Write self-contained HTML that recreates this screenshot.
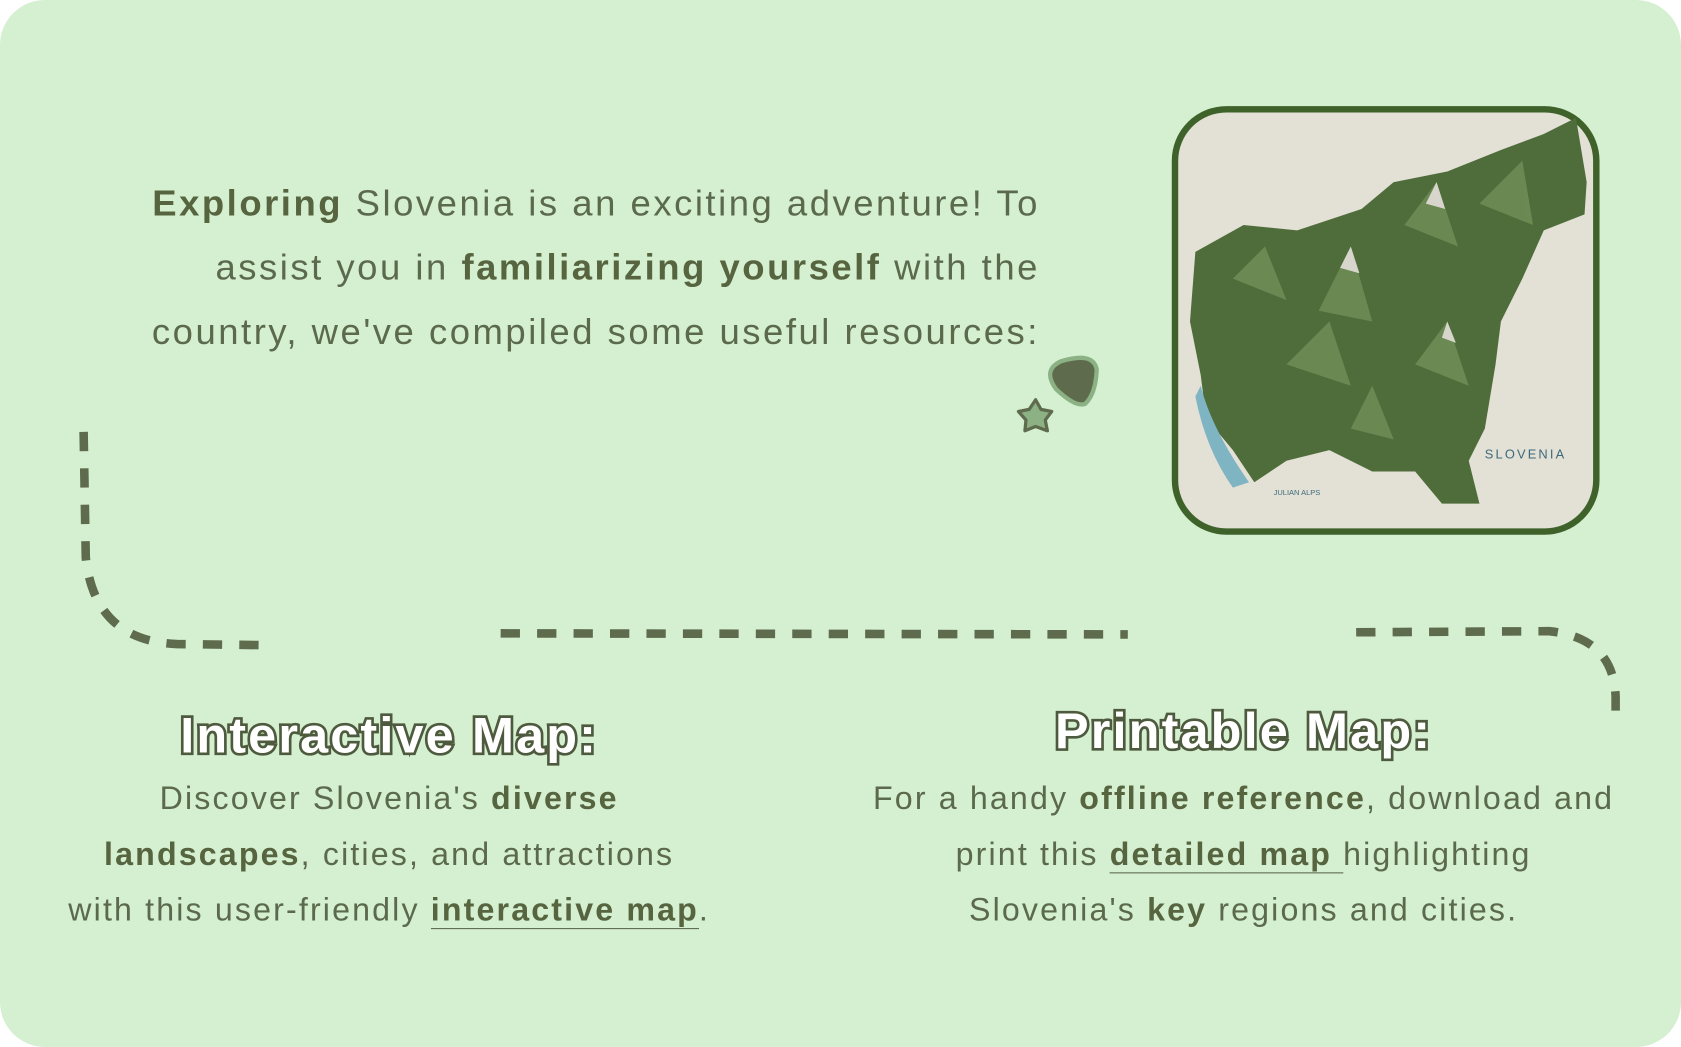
<!DOCTYPE html>
<html><head><meta charset="utf-8"><style>
html,body{margin:0;padding:0;width:1681px;height:1047px;overflow:hidden;background:#fff}
#w{position:absolute;left:0;top:0;width:1568px;height:977px;transform:scale(1.07207,1.07165);transform-origin:0 0;background:#d5efd1;border-radius:42px;font-family:"Liberation Sans",sans-serif;color:#5c6a4c}
.intro{position:absolute;left:40px;top:160px;width:930px;text-align:right;font-size:34px;line-height:60px;letter-spacing:2.35px}
.b{font-weight:bold;color:#56643f}
.h{position:absolute;font-size:47px;font-weight:900;color:#fff;-webkit-text-stroke:5px #4e5a3d;paint-order:stroke fill;text-align:center;letter-spacing:2px}
.p{position:absolute;text-align:center;font-size:30px;line-height:52px;letter-spacing:2px}
u{text-decoration:none;border-bottom:1px solid #5c6a4c}
</style></head><body><div id="w">
<div class="intro"><span class="b">Exploring</span> Slovenia is an exciting adventure! To<br>assist you in <span class="b">familiarizing yourself</span> with the<br>country, we've compiled some useful resources:</div>

<svg width="1568" height="977" style="position:absolute;left:0;top:0">
<g fill="none" stroke="#5e6b4c" stroke-width="8" stroke-dasharray="18 16">
<path d="M78 403 L80 520 Q88 598 165 601 L245 602"/>
<path d="M467 591 L1052 592"/>
<path d="M1265 590 L1445 589 Q1505 595 1507 650 L1507 668"/>
</g>
<path d="M990 337 Q1020 328 1023 345 Q1022 368 1012 377 Q1003 380 985 363 Q972 345 990 337Z" fill="#5e6b4c" stroke="#8bb185" stroke-width="4"/>
<path d="M966 373 L971 382 L981 384 L975 392 L977 402 L966 398 L956 402 L957 392 L950 384 L960 382Z" fill="#8bb185" stroke="#5e6b4c" stroke-width="3" stroke-linejoin="round"/>
<rect x="1096" y="102" width="393" height="394" rx="48" fill="#e3e0d6" stroke="#3e6229" stroke-width="6"/>
<path d="M1115 235 L1160 210 L1210 215 L1270 195 L1300 170 L1350 160 L1400 140 L1440 125 L1470 110 L1480 170 L1478 200 L1440 215 L1420 260 L1400 300 L1395 340 L1385 400 L1370 430 L1380 470 L1345 470 L1320 440 L1280 440 L1240 420 L1200 430 L1170 450 L1150 420 L1125 390 L1120 350 L1110 300 Z" fill="#4f6d3a"/>
<g fill="#6e8c55" opacity="0.9">
<path d="M1150 260 L1180 230 L1200 280 Z"/><path d="M1230 290 L1260 230 L1280 300 Z"/><path d="M1310 210 L1340 170 L1360 230 Z"/><path d="M1380 190 L1420 150 L1430 210 Z"/><path d="M1200 340 L1240 300 L1260 360 Z"/><path d="M1320 340 L1350 300 L1370 360 Z"/><path d="M1260 400 L1280 360 L1300 410 Z"/>
</g>
<g fill="#d8d6cc"><path d="M1330 190 L1340 170 L1348 195Z"/><path d="M1250 250 L1260 230 L1268 255Z"/><path d="M1345 315 L1350 300 L1358 320Z"/></g>
<path d="M1120 360 Q1130 400 1165 450 L1150 455 Q1125 420 1115 370Z" fill="#7fb4c2"/>
<text x="1385" y="428" font-size="12" fill="#3d6a7a" letter-spacing="2">SLOVENIA</text>
<text x="1188" y="462" font-size="7" fill="#3d6a7a">JULIAN ALPS</text>
</svg>

<div class="h" style="left:40px;top:658px;width:646px">Interactive Map:</div>
<div class="p" style="left:20px;top:720px;width:686px">Discover Slovenia's <span class="b">diverse</span><br><span class="b">landscapes</span>, cities, and attractions<br>with this user-friendly <u class="b">interactive map</u>.</div>

<div class="h" style="left:840px;top:654px;width:640px">Printable Map:</div>
<div class="p" style="left:760px;top:720px;width:800px">For a handy <span class="b">offline reference</span>, download and<br>print this <u class="b">detailed map </u> highlighting<br>Slovenia's <span class="b">key</span> regions and cities.</div>
</div></body></html>
